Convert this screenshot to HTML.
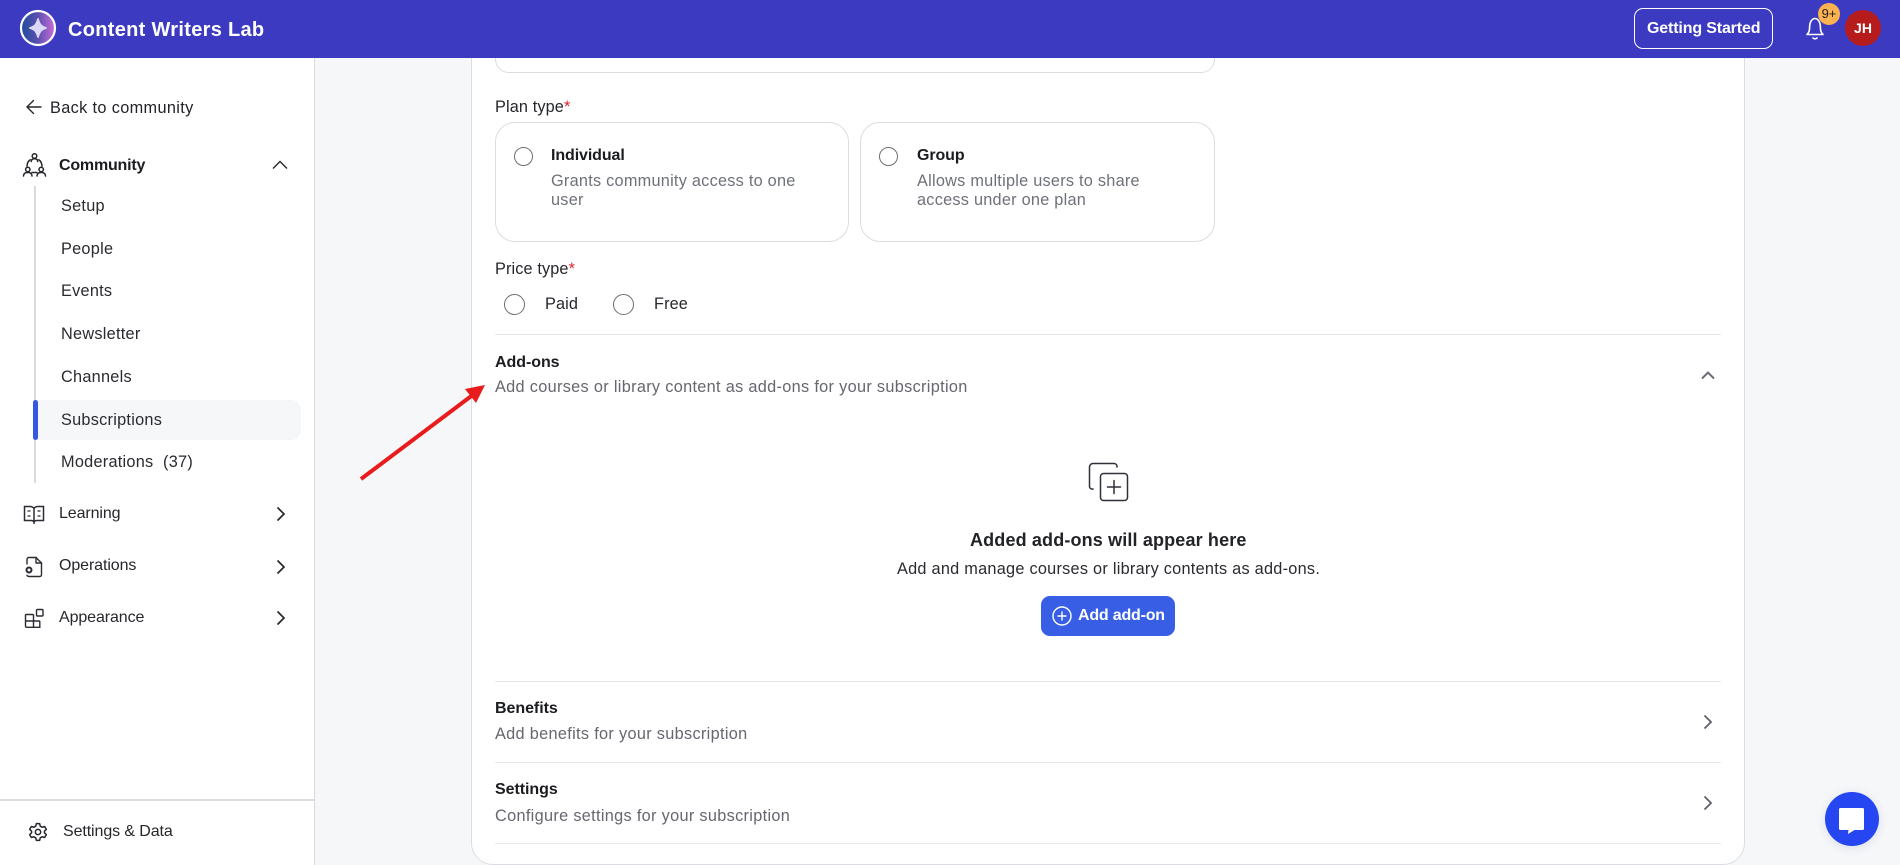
<!DOCTYPE html>
<html lang="en"><head><meta charset="utf-8"><title>Content Writers Lab</title>
<style>
*{box-sizing:border-box}
html,body{margin:0;padding:0;width:1900px;height:865px;overflow:hidden;background:#f6f7f9;font-family:"Liberation Sans",Arial,sans-serif;color:#1f2024}
.a{position:absolute}
.t{position:absolute;white-space:nowrap;line-height:20px;font-size:16px}
.nav{left:61px;font-size:16.3px;letter-spacing:.26px;color:#2a2b30}
.g{color:#66676f;font-size:16.3px;letter-spacing:.32px}
.d{color:#6f717a;font-size:16.3px;letter-spacing:.25px}
.b{font-weight:700;color:#1b1c20}
.l{font-size:16.3px;letter-spacing:.12px;color:#26272b}
.ar{color:#26272b;letter-spacing:-.1px}
.r{color:#e0202a}
.rad{position:absolute;border:1.3px solid #6d6e73;border-radius:50%;background:#fff}
.sep{position:absolute;left:495px;width:1226px;height:1px;background:#e6e7ea}
.opt{position:absolute;top:122px;height:120px;border:1px solid #dcdde1;border-radius:20px;background:#fff}
svg{position:absolute;overflow:visible}
</style></head><body>

<div class="a" style="left:0;top:58px;width:315px;height:807px;background:#fff;border-right:1.5px solid #d9dae0"></div>
<div class="a" style="left:471px;top:40px;width:1274px;height:825px;background:#fff;border:1.5px solid #dcdde2;border-radius:0 0 22px 22px"></div>
<div class="a" style="left:495px;top:30px;width:720px;height:43px;border:1px solid #dcdde1;border-radius:0 0 14px 14px;background:#fff"></div>

<div class="a" style="left:0;top:0;width:1900px;height:58px;background:#3d3ac2"></div>
<svg style="left:0;top:0" width="80" height="58" viewBox="0 0 80 58">
<defs><linearGradient id="lg" x1="0" y1="0" x2="1" y2="0"><stop offset="0" stop-color="#1c4d9d"/><stop offset=".5" stop-color="#5d4fb0"/><stop offset="1" stop-color="#c86fd8"/></linearGradient></defs>
<circle cx="38" cy="28" r="17" fill="url(#lg)" stroke="#fff" stroke-width="2.2"/>
<path d="M38 19C39.500 24.500 41 26.500 46 28 41 29.500 39.500 31.500 38 37 36.500 31.500 35 29.500 30 28 35 26.500 36.500 24.500 38 19Z" fill="#dcd8f7" stroke="#dcd8f7" stroke-width="1.800" stroke-linejoin="round"/>
</svg>
<div class="t" style="left:68px;top:20px;font-size:20px;font-weight:700;color:#fff;letter-spacing:.3px">Content Writers Lab</div>
<div class="a" style="left:1634px;top:8px;width:139px;height:41px;border:1.5px solid #fff;border-radius:9px"></div>
<div class="t" style="left:1647px;top:19px;font-weight:700;color:#fff;letter-spacing:-.15px">Getting Started</div>
<svg style="left:1804px;top:16px" width="24" height="24" viewBox="0 0 24 24" fill="none" stroke="#fff" stroke-width="1.6" stroke-linecap="round" stroke-linejoin="round"><path d="M3 18.500c2-1.800 2.600-3.500 2.600-7C5.600 6 8 2.500 11 2.500s5.400 3.500 5.400 9c0 3.500.6 5.200 2.600 7Z"/><path d="M9 22c1.200 1 2.800 1 4 0"/></svg>
<div class="a" style="left:1818px;top:3px;width:22px;height:22px;border-radius:50%;background:#fbb24f"></div>
<div class="t" style="left:1818px;top:4px;width:22px;text-align:center;font-size:13px;color:#1f1f1f">9+</div>
<div class="a" style="left:1845px;top:10px;width:36px;height:36px;border-radius:50%;background:#b71c1c"></div>
<div class="t" style="left:1845px;top:18px;width:36px;text-align:center;font-size:14px;font-weight:700;color:#fff">JH</div>

<!-- Sidebar -->
<svg style="left:26px;top:99px" width="16" height="16" viewBox="0 0 16 16" fill="none" stroke="#26272b" stroke-width="1.4" stroke-linecap="round" stroke-linejoin="round"><path d="M15 8H1M7.500 1.500 1 8l6.500 6.500"/></svg>
<div class="t" style="left:50px;top:98px;font-size:16.3px;letter-spacing:.36px;color:#232428">Back to community</div>

<svg style="left:22px;top:152px" width="26" height="26" viewBox="0 0 26 26" fill="none" stroke="#26272b" stroke-width="1.500" stroke-linecap="round"><circle cx="12.500" cy="4" r="2.300"/><path d="M9.300 9.500c0-2 1.200-2.800 3.200-2.800s3.200.8 3.200 2.800"/><path d="M5 14c.2-3 1.300-5 3.200-6.200M20 14c-.2-3-1.300-5-3.200-6.200"/><circle cx="5.800" cy="17.500" r="2.200"/><circle cx="19.200" cy="17.500" r="2.200"/><path d="M1.500 24c0-2.500 1.800-3.500 4.300-3.500S10 21.500 10 24M15 24c0-2.500 1.700-3.500 4.200-3.500s4.300 1 4.300 3.500M10 20.500h5"/></svg>
<div class="t b" style="left:59px;top:156px;letter-spacing:-.2px">Community</div>
<svg style="left:272px;top:159px" width="16" height="12" viewBox="0 0 16 12" fill="none" stroke="#26272b" stroke-width="1.4"><path d="M1 9.500 8 2.500l7 7"/></svg>

<div class="a" style="left:34px;top:186px;width:2px;height:297px;background:#ddd8d9"></div>
<div class="a" style="left:33px;top:400px;width:268px;height:40px;background:#f6f7f9;border-radius:0 10px 10px 0"></div>
<div class="a" style="left:33px;top:400px;width:5px;height:40px;background:#3558e5;border-radius:3px"></div>
<div class="t nav" style="top:196px">Setup</div>
<div class="t nav" style="top:239px">People</div>
<div class="t nav" style="top:281px">Events</div>
<div class="t nav" style="top:324px">Newsletter</div>
<div class="t nav" style="top:367px">Channels</div>
<div class="t nav" style="top:410px">Subscriptions</div>
<div class="t nav" style="top:452px">Moderations&nbsp; (37)</div>

<svg style="left:23px;top:505px" width="22" height="20" viewBox="0 0 22 20" fill="none" stroke="#2b2c33" stroke-width="1.5"><path d="M11 3.500C10 2 9 1.500 7 1.500H1.500v14H8c1.500 0 2.500.5 3 1.500.5-1 1.500-1.500 3-1.500h6.500v-14H15c-2 0-3 .5-4 2ZM11 3.500V19"/><path d="M4.500 6h3M4.500 11h3M14.500 6h3M14.500 11h3" stroke-width="1.3"/></svg>
<div class="t ar" style="left:59px;top:504px">Learning</div>
<svg style="left:24px;top:556px" width="20" height="22" viewBox="0 0 20 22" fill="none" stroke="#2b2c33" stroke-width="1.4" stroke-linecap="round" stroke-linejoin="round"><path d="M3 8V3.500C3 2.300 3.800 1.500 5 1.500h7l5.500 5.500v11.500c0 1.200-.8 2-2 2H5c-1 0-1.700-.4-2-1.200"/><path d="M12 1.500V7h5.500"/><circle cx="5" cy="14" r="2.500" stroke-width="2"/></svg>
<div class="t ar" style="left:59px;top:556px">Operations</div>
<svg style="left:24px;top:608px" width="21" height="21" viewBox="0 0 21 21" fill="none" stroke="#2b2c33" stroke-width="1.4"><path d="M2 6.500h6.500a1 1 0 0 1 1 1v5.500h5.500a.8.800 0 0 1 .8.8v5.500H2.500a1 1 0 0 1-1-1V7a.6.600 0 0 1 .5-.5ZM1.500 13h8v6.800"/><rect x="12.500" y="1.500" width="6.500" height="6.500" rx="1"/></svg>
<div class="t ar" style="left:59px;top:608px">Appearance</div>
<svg style="left:276px;top:506px" width="10" height="16" viewBox="0 0 10 16" fill="none" stroke="#26272b" stroke-width="1.7"><path d="M1.500 1.500 8 8l-6.500 6.500"/></svg>
<svg style="left:276px;top:559px" width="10" height="16" viewBox="0 0 10 16" fill="none" stroke="#26272b" stroke-width="1.7"><path d="M1.500 1.500 8 8l-6.500 6.500"/></svg>
<svg style="left:276px;top:610px" width="10" height="16" viewBox="0 0 10 16" fill="none" stroke="#26272b" stroke-width="1.7"><path d="M1.500 1.500 8 8l-6.500 6.500"/></svg>

<div class="a" style="left:0;top:799px;width:314px;height:2px;background:#dcdce2"></div>
<svg style="left:28px;top:822px" width="20" height="20" viewBox="0 0 24 24" fill="none" stroke="#26272b" stroke-width="1.800" stroke-linejoin="round"><circle cx="12" cy="12" r="3.200"/><path d="M10 2h4l.7 3 2.300 1.300 3-.9 2 3.400-2.300 2.200v2l2.300 2.200-2 3.400-3-.9L14.700 19l-.7 3h-4l-.7-3L7 17.700l-3 .9-2-3.400L4.300 13v-2L2 8.800l2-3.400 3 .9L9.300 5Z"/></svg>
<div class="t ar" style="left:63px;top:822px">Settings &amp; Data</div>

<!-- Main form -->
<div class="t l" style="left:495px;top:97px">Plan type<span class="r">*</span></div>
<div class="opt" style="left:495px;width:354px"></div>
<div class="opt" style="left:860px;width:355px"></div>
<div class="rad" style="left:514px;top:147px;width:19px;height:19px"></div>
<div class="rad" style="left:879px;top:147px;width:19px;height:19px"></div>
<div class="t b" style="left:551px;top:146px;letter-spacing:-.1px">Individual</div>
<div class="t d" style="left:551px;top:171px">Grants community access to one</div>
<div class="t d" style="left:551px;top:190px">user</div>
<div class="t b" style="left:917px;top:146px;letter-spacing:-.1px">Group</div>
<div class="t d" style="left:917px;top:171px">Allows multiple users to share</div>
<div class="t d" style="left:917px;top:190px">access under one plan</div>

<div class="t l" style="left:495px;top:259px">Price type<span class="r">*</span></div>
<div class="rad" style="left:504px;top:294px;width:21px;height:21px"></div>
<div class="t l" style="left:545px;top:294px">Paid</div>
<div class="rad" style="left:613px;top:294px;width:21px;height:21px"></div>
<div class="t l" style="left:654px;top:294px">Free</div>

<div class="sep" style="top:334px"></div>
<div class="t b" style="left:495px;top:353px;letter-spacing:-.05px">Add-ons</div>
<div class="t g" style="left:495px;top:377px">Add courses or library content as add-ons for your subscription</div>
<svg style="left:1700px;top:369px" width="16" height="12" viewBox="0 0 16 12" fill="none" stroke="#6b6d76" stroke-width="2"><path d="M2 9.500 8 3.500l6 6"/></svg>

<svg style="left:355px;top:380px" width="140" height="105" viewBox="355 380 140 105"><path d="M361 479 474 394" stroke="#e81c1c" stroke-width="4"/><path d="M485 385 465 389 476 403Z" fill="#e81c1c"/></svg>

<svg style="left:1088px;top:462px" width="42" height="41" viewBox="0 0 42 41" fill="none" stroke="#2f3038" stroke-width="1.500" stroke-linecap="round" stroke-linejoin="round"><path d="M29 5V4a3 3 0 0 0-3-2.500H5A3.500 3.500 0 0 0 1.500 5v20A3 3 0 0 0 5 27"/><rect x="12.500" y="11.500" width="27" height="27" rx="3"/><path d="M26 18.500v13M19.500 25h13"/></svg>
<div class="t b" style="left:970px;top:530px;font-size:18px;letter-spacing:.15px;color:#222327">Added add-ons will appear here</div>
<div class="t" style="left:897px;top:559px;font-size:16.3px;letter-spacing:.26px;color:#2a2b30">Add and manage courses or library contents as add-ons.</div>
<div class="a" style="left:1041px;top:596px;width:134px;height:40px;background:#385ee6;border-radius:9px"></div>
<svg style="left:1052px;top:606px" width="20" height="20" viewBox="0 0 20 20" fill="none" stroke="#fff" stroke-width="1.400"><circle cx="10" cy="10" r="9"/><path d="M10 5.500v9M5.500 10h9"/></svg>
<div class="t" style="left:1078px;top:606px;font-weight:700;color:#fff;letter-spacing:-.2px">Add add-on</div>

<div class="sep" style="top:681px"></div>
<div class="t b" style="left:495px;top:699px;letter-spacing:-.05px">Benefits</div>
<div class="t g" style="left:495px;top:724px">Add benefits for your subscription</div>
<svg style="left:1702px;top:714px" width="12" height="16" viewBox="0 0 12 16" fill="none" stroke="#5f6068" stroke-width="1.800"><path d="M2.500 1.500 9 8l-6.500 6.500"/></svg>
<div class="sep" style="top:762px"></div>
<div class="t b" style="left:495px;top:780px;letter-spacing:-.05px">Settings</div>
<div class="t g" style="left:495px;top:806px">Configure settings for your subscription</div>
<svg style="left:1702px;top:795px" width="12" height="16" viewBox="0 0 12 16" fill="none" stroke="#5f6068" stroke-width="1.800"><path d="M2.500 1.500 9 8l-6.500 6.500"/></svg>
<div class="sep" style="top:843px"></div>

<div class="a" style="left:1825px;top:792px;width:54px;height:54px;border-radius:50%;background:#2546f0;box-shadow:0 2px 10px rgba(30,50,120,.12)"></div>
<svg style="left:1838px;top:807px" width="28" height="28" viewBox="0 0 28 28"><path d="M2.500 1h22A1.500 1.500 0 0 1 26 2.500v19a1.500 1.500 0 0 1-1.500 1.500H16.500l-6.500 4 .5-4H2.500A1.500 1.500 0 0 1 1 21.500v-19A1.500 1.500 0 0 1 2.500 1Z" fill="#fff"/></svg>

</body></html>
